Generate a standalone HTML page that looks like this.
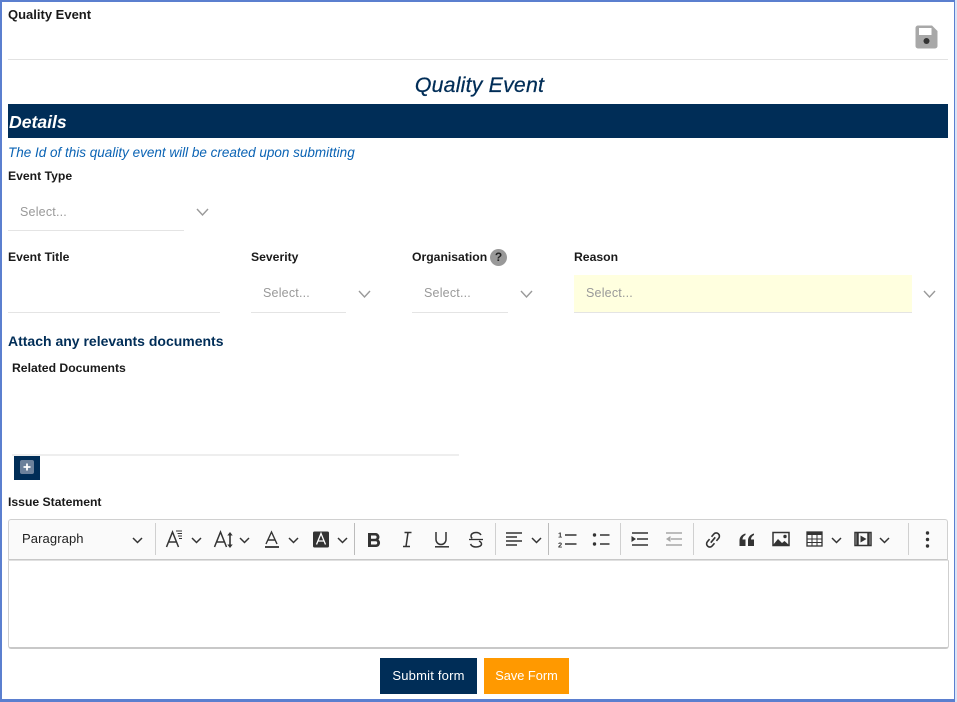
<!DOCTYPE html>
<html><head><meta charset="utf-8"><style>
html,body{margin:0;padding:0;background:#fff}
#p{position:relative;width:957px;height:702px;overflow:hidden;background:#fff;font-family:"Liberation Sans",sans-serif}
#p>*{position:absolute}
.l{font-size:12.2px;font-weight:700;color:#1a1a1a;white-space:nowrap;line-height:16px}
.s{font-size:12.5px;color:#999;white-space:nowrap;line-height:16px;letter-spacing:.2px}
.u{height:1px;background:#e4e4e4}
svg{overflow:visible}
.sep{width:1px;background:#d0d0d0;top:523px;height:32px}
</style></head><body><div id="p">
<div style="left:0;top:0;width:952px;height:697px;border:2px solid #5b7fcf;border-right-width:3px;border-bottom-width:3px"></div>
<div style="left:955px;top:0;width:2px;height:702px;background:#dbe4f6"></div>

<div class="l" style="left:8px;top:7px;font-size:13px">Quality Event</div>
<svg style="left:915px;top:25px" width="23" height="24" viewBox="0 0 23 24"><path d="M3 0.5H17L22.5 6V21a2.5 2.5 0 0 1-2.500 2.500H3A2.500 2.500 0 0 1 .5 21V3A2.500 2.500 0 0 1 3 .5Z" fill="#a8a8a8"/><rect x="4" y="3" width="12.500" height="7" fill="#fff"/><circle cx="11.500" cy="16" r="3" fill="#333"/></svg>
<div style="left:8px;top:59px;width:940px;height:1px;background:#e2e2e2"></div>

<div style="left:8px;width:943px;top:71px;text-align:center;font-style:italic;font-size:21.300px;line-height:28px;color:#002d57;letter-spacing:.2px;-webkit-text-stroke:.25px #002d57">Quality Event</div>
<div style="left:8px;top:104px;width:940px;height:34px;background:#002d57"></div>
<div style="left:9px;top:109px;font-style:italic;font-weight:700;font-size:17.600px;line-height:26px;color:#fff">Details</div>
<div style="left:8px;top:144px;font-style:italic;font-size:13.500px;line-height:18px;color:#0a63b4;white-space:nowrap">The Id of this quality event will be created upon submitting</div>

<div class="l" style="left:8px;top:168px">Event Type</div>
<div class="s" style="left:20px;top:204px">Select...</div>
<div class="u" style="left:8px;top:230px;width:176px"></div>
<svg style="left:196px;top:208px" width="13" height="8"><path d="M1 1l5.500 6L12 1" fill="none" stroke="#999" stroke-width="1.400"/></svg>

<div class="l" style="left:8px;top:249px">Event Title</div>
<div class="u" style="left:8px;top:312px;width:212px"></div>

<div class="l" style="left:251px;top:249px">Severity</div>
<div class="s" style="left:263px;top:285px">Select...</div>
<div class="u" style="left:251px;top:312px;width:95px"></div>
<svg style="left:358px;top:290px" width="13" height="8"><path d="M1 1l5.500 6L12 1" fill="none" stroke="#999" stroke-width="1.400"/></svg>

<div class="l" style="left:412px;top:249px">Organisation</div>
<div style="left:490px;top:249px;width:17px;height:17px;border-radius:50%;background:#999;color:#222;font-size:12px;font-weight:700;text-align:center;line-height:17px">?</div>
<div class="s" style="left:424px;top:285px">Select...</div>
<div class="u" style="left:412px;top:312px;width:96px"></div>
<svg style="left:520px;top:290px" width="13" height="8"><path d="M1 1l5.500 6L12 1" fill="none" stroke="#999" stroke-width="1.400"/></svg>

<div class="l" style="left:574px;top:249px">Reason</div>
<div style="left:574px;top:275px;width:338px;height:37px;background:#ffffdf"></div>
<div class="s" style="left:586px;top:285px">Select...</div>
<div class="u" style="left:574px;top:312px;width:338px"></div>
<svg style="left:923px;top:290px" width="13" height="8"><path d="M1 1l5.500 6L12 1" fill="none" stroke="#999" stroke-width="1.400"/></svg>

<div style="left:8px;top:333px;font-size:14px;font-weight:700;line-height:16px;color:#002d57;white-space:nowrap">Attach any relevants documents</div>
<div class="l" style="left:12px;top:360px">Related Documents</div>
<div style="left:12px;top:454px;width:447px;height:2px;background:#eeeeee"></div>
<div style="left:14px;top:456px;width:26px;height:24px;background:#002d57"></div>
<div style="left:20px;top:460px;width:14px;height:14px;border-radius:2px;background:#6c819b"></div>
<svg style="left:20px;top:460px" width="14" height="14"><path d="M7 3.500v7M3.500 7h7" stroke="#fff" stroke-width="1.800"/></svg>

<div class="l" style="left:8px;top:494px">Issue Statement</div>

<div style="left:8px;top:519px;width:938px;height:39px;background:#fafafa;border:1px solid #d0d0d0;border-bottom:2px solid #c8c8c8;border-radius:3px 3px 0 0"></div>
<div style="left:8px;top:560px;width:939px;height:86px;background:#fff;border:1px solid #cfcfcf;border-bottom:2px solid #c8c8c8;border-radius:0 0 3px 3px;border-top:1px solid #e0e0e0"></div>
<div style="left:22px;top:531px;font-size:13px;line-height:16px;color:#222;letter-spacing:.1px">Paragraph</div>

<div class="sep" style="left:155px"></div><div class="sep" style="left:354px;background:#bbb"></div><div class="sep" style="left:495px"></div><div class="sep" style="left:548px;background:#bbb"></div><div class="sep" style="left:620px"></div><div class="sep" style="left:693px"></div><div class="sep" style="left:908px"></div>

<svg style="left:0;top:519px" width="957" height="41" fill="none" stroke="#333" stroke-width="1.400">
<g stroke-width="1.500"><path d="M133 19l4.500 4.500L142 19"/><path d="M192 19l4.500 4.500L201 19"/><path d="M240 19l4.500 4.500L249 19"/><path d="M289 19l4.500 4.500L298 19"/><path d="M338 19l4.500 4.500L347 19"/><path d="M532 19l4.500 4.500L541 19"/><path d="M832 19l4.500 4.500L841 19"/><path d="M880 19l4.500 4.500L889 19"/></g>
<path d="M166.500 28L172.500 13L178.500 28M168.500 23H176.500" stroke-width="1.500"/><path d="M176 12h6M177.500 14.500h4.500M178 17h4M179 19.500h3" stroke-width="1"/>
<path d="M214.500 28L220.500 13L226.500 28M216.800 23H224.200" stroke-width="1.500"/><path d="M230 15v12" stroke-width="1.600"/><path d="M227.300 16.500L230 13l2.700 3.500zM227.300 25.500L230 29l2.700-3.500z" fill="#333" stroke="none"/>
<path d="M266 25L271.500 13L277 25M268 21H275" stroke-width="1.400"/><path d="M265 28h14" stroke-width="1.800"/>
<rect x="313" y="12.500" width="16" height="16" rx="1.500" fill="#333" stroke="none"/><path d="M316.500 25.500L321 14.500L325.500 25.500M318 22H324" stroke="#fff" stroke-width="1.300"/>
<path fill-rule="evenodd" stroke="none" fill="#333" d="M368 14h7.500a4 4 0 0 1 3 6.600a4.200 4.200 0 0 1-2.300 7.400H368zM371 16.500v3.200h4a1.600 1.600 0 0 0 0-3.200zM371 22.300v3.200h4.600a1.600 1.600 0 0 0 0-3.200z"/>
<path d="M404.500 13.500h7M403 27.500h7M408 13.500l-2 14" stroke-width="1.500"/>
<path d="M436 13v7.500a5 5 0 0 0 10 0V13" stroke-width="1.500"/><path d="M435 27.800h14" stroke-width="1.500"/>
<path d="M469 20.500h14" stroke-width="1.300"/><path d="M481 16c-1-1.700-2.800-2.500-5-2.500-3 0-5 1.500-5 3.500 0 1 .4 1.800 1.200 2.500M479 22c1.500.7 2.500 1.800 2.500 3 0 1.800-2.500 3-5.500 3-2.500 0-4.500-1-5.500-3" stroke-width="1.500"/>
<path d="M506 14h16M506 18h11M506 22h16M506 26h11" stroke-width="1.500"/>
<path d="M565 16h11.500M565 25h11.500" stroke-width="1.500"/>
<text x="558" y="18.500" font-family="Liberation Sans,sans-serif" font-size="7.500" font-weight="700" fill="#333" stroke="none">1</text>
<text x="558" y="28.500" font-family="Liberation Sans,sans-serif" font-size="7.500" font-weight="700" fill="#333" stroke="none">2</text>
<circle cx="594.500" cy="16" r="1.700" fill="#333" stroke="none"/><circle cx="594.500" cy="25" r="1.700" fill="#333" stroke="none"/><path d="M600 16h9.500M600 25h9.500" stroke-width="1.500"/>
<path d="M632 14h16M637 20h11M632 26h16" stroke-width="1.500"/><path d="M631.500 17l4.500 3-4.500 3z" fill="#333" stroke="none"/>
<path d="M666 14h16M671 20h11M666 26h16" stroke="#a8a8a8" stroke-width="1.500"/><path d="M670.500 17l-4.500 3 4.500 3z" fill="#a8a8a8" stroke="none"/>
<g transform="translate(713 21) rotate(40)" stroke-width="1.600"><path d="M-3.200 -1.500V-5a3.200 3.200 0 0 1 6.400 0V-1.500M-3.200 1.500V5a3.200 3.200 0 0 0 6.400 0V1.500M0 -3.500V3.500"/></g>
<path d="M739.500 27h6v-6.500h-3c0-2 1-3.500 3-4.500v-1.500c-3.500.8-6 3.500-6 7zM748 27h6v-6.500h-3c0-2 1-3.500 3-4.500v-1.500c-3.500.8-6 3.500-6 7z" fill="#333" stroke="none"/>
<rect x="773" y="13.500" width="16" height="13" fill="none" stroke-width="1.500"/><path d="M773 26l5-6 4 4 2.500-2 4.500 4v1h-16z" fill="#333" stroke="none"/><circle cx="785" cy="17.500" r="1.700" fill="#333" stroke="none"/>
<rect x="807" y="13" width="15" height="14" fill="none" stroke-width="1.300"/><path d="M807 14.500h15" stroke-width="3"/><path d="M807 20h15M807 23.500h15M812 15v12M817 15v12" stroke-width="1"/>
<rect x="855" y="13.500" width="16" height="13" fill="none" stroke-width="1.500"/><path d="M857.500 14v12M868.500 14v12" stroke-width="2.500"/><path d="M860.500 16.500l6 3.500-6 3.500z" fill="#333" stroke="none"/>
<circle cx="927.500" cy="14" r="1.700" fill="#333" stroke="none"/><circle cx="927.500" cy="20.500" r="1.700" fill="#333" stroke="none"/><circle cx="927.500" cy="27" r="1.700" fill="#333" stroke="none"/>
</svg>

<div style="left:380px;top:658px;width:97px;height:36px;background:#002d57;color:#fff;font-size:13px;line-height:36px;text-align:center;letter-spacing:.2px">Submit form</div>
<div style="left:484px;top:658px;width:85px;height:36px;background:#ff9900;color:#fff;font-size:12.800px;line-height:36px;text-align:center">Save Form</div>
</div></body></html>
